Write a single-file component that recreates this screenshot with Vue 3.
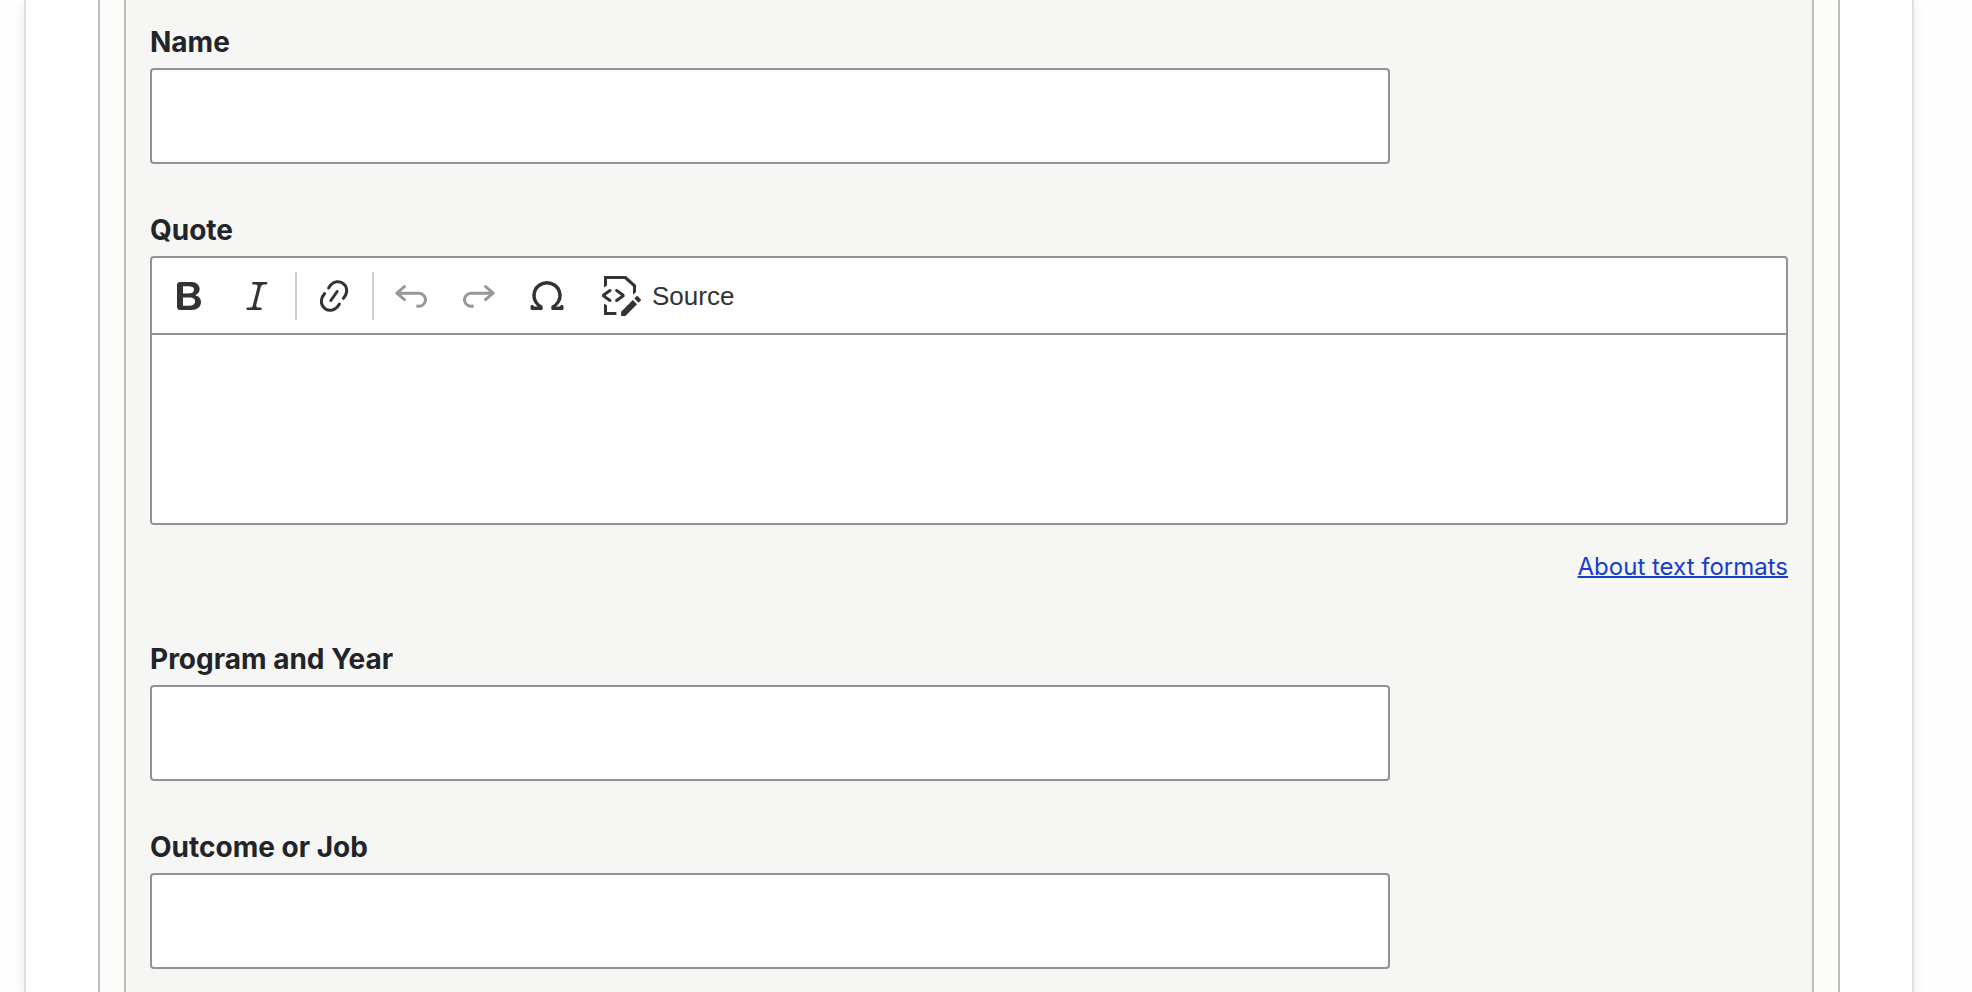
<script setup>
import { ref } from 'vue'

const name = ref('')
const quote = ref('')
const program = ref('')
const outcome = ref('')

const icons = {
  bold: 'M10.187 17H5.773c-.637 0-1.092-.138-1.364-.415-.273-.277-.409-.718-.409-1.323V4.738c0-.617.14-1.062.419-1.332.279-.27.73-.406 1.354-.406h4.68c.69 0 1.288.041 1.793.124.506.083.96.242 1.36.478.341.197.644.447.906.75a3.262 3.262 0 0 1 .808 2.162c0 1.401-.722 2.426-2.167 3.075C15.05 10.175 16 11.315 16 13.01a3.756 3.756 0 0 1-2.296 3.504 6.1 6.1 0 0 1-1.517.377c-.571.073-1.238.11-2 .11zm-.217-6.217H7v4.087h3.069c1.977 0 2.965-.69 2.965-2.072 0-.707-.256-1.22-.768-1.537-.512-.319-1.277-.478-2.296-.478zM7 5.13v3.619h2.606c.729 0 1.292-.067 1.69-.2a1.6 1.6 0 0 0 .91-.765c.165-.267.247-.566.247-.897 0-.707-.26-1.176-.778-1.409-.519-.232-1.31-.348-2.375-.348H7z',
  italic: 'm9.586 14.633.021.004c-.036.335.095.655.393.962.082.083.173.15.274.201h1.474a.6.6 0 1 1 0 1.2H5.304a.6.6 0 0 1 0-1.2h1.15c.474-.07.809-.182 1.005-.334.157-.122.291-.32.404-.597l2.416-9.55a1.053 1.053 0 0 0-.281-.823 1.12 1.12 0 0 0-.442-.296H8.15a.6.6 0 0 1 0-1.2h6.443a.6.6 0 1 1 0 1.2h-1.195c-.376.056-.65.155-.823.296-.215.175-.423.439-.623.79l-2.366 9.347z',
  link: 'm11.077 15 .991-1.416a.75.75 0 1 1 1.229.86l-1.148 1.64a.748.748 0 0 1-.217.206 5.251 5.251 0 0 1-8.503-5.955.741.741 0 0 1 .12-.274l1.147-1.639a.75.75 0 1 1 1.228.86L4.933 10.7l.006.003a3.75 3.75 0 0 0 6.132 4.294l.006.004zm5.494-5.335a.748.748 0 0 1-.12.274l-1.147 1.639a.75.75 0 1 1-1.228-.86l.86-1.23a3.75 3.75 0 0 0-6.144-4.301l-.86 1.229a.75.75 0 0 1-1.229-.86l1.148-1.64a.748.748 0 0 1 .217-.206 5.251 5.251 0 0 1 8.503 5.955zm-4.563-2.532a.75.75 0 0 1 .184 1.045l-3.155 4.505a.75.75 0 1 1-1.229-.86l3.155-4.506a.75.75 0 0 1 1.045-.184z',
  undo: 'm5.042 9.367 2.189 1.837a.75.75 0 0 1-.965 1.149l-3.788-3.18a.747.747 0 0 1-.21-.284.75.75 0 0 1 .17-.945L6.23 4.762a.75.75 0 1 1 .964 1.15L4.863 7.866h8.917A.75.75 0 0 1 14 7.9a4 4 0 1 1-1.477 7.718l.344-1.489a2.5 2.5 0 1 0 1.094-4.73l.008-.032H5.042z',
  redo: 'm14.958 9.367-2.189 1.837a.75.75 0 0 0 .965 1.149l3.788-3.18a.747.747 0 0 0 .21-.284.75.75 0 0 0-.17-.945L13.77 4.762a.75.75 0 1 0-.964 1.15l2.331 1.955H6.22A.75.75 0 0 0 6 7.9a4 4 0 1 0 1.477 7.718l-.344-1.489A2.5 2.5 0 1 1 6.039 9.4l-.008-.032h8.927z',
  omega: 'M10 2.5a7.47 7.47 0 0 1 4.231 1.31 7.268 7.268 0 0 1 2.703 3.454 7.128 7.128 0 0 1 .199 4.353c-.39 1.436-1.475 2.72-2.633 3.677h2.013c0-.226.092-.443.254-.603a.876.876 0 0 1 1.229 0c.163.16.254.377.254.603v.853c0 .209-.078.41-.22.567a.873.873 0 0 1-.547.28l-.101.006h-4.695a.517.517 0 0 1-.516-.518v-1.265c0-.21.128-.398.317-.489a5.601 5.601 0 0 0 2.492-2.371 5.459 5.459 0 0 0 .552-3.693 5.53 5.53 0 0 0-1.955-3.2A5.71 5.71 0 0 0 10 4.206 5.708 5.708 0 0 0 6.419 5.46 5.527 5.527 0 0 0 4.46 8.663a5.457 5.457 0 0 0 .554 3.695 5.6 5.6 0 0 0 2.497 2.37.55.55 0 0 1 .317.49v1.264c0 .286-.23.518-.516.518H2.618a.877.877 0 0 1-.614-.25.845.845 0 0 1-.254-.603v-.853c0-.226.091-.443.254-.603a.876.876 0 0 1 1.228 0c.163.16.255.377.255.603h1.925c-1.158-.958-2.155-2.241-2.545-3.678a7.128 7.128 0 0 1 .199-4.352 7.268 7.268 0 0 1 2.703-3.455A7.475 7.475 0 0 1 10 2.5z',
}

const groups = [
  [{ label: 'Bold', icon: 'bold' }, { label: 'Italic', icon: 'italic' }],
  [{ label: 'Link', icon: 'link' }],
  [
    { label: 'Undo', icon: 'undo', disabled: true },
    { label: 'Redo', icon: 'redo', disabled: true },
    { label: 'Special characters', icon: 'omega' },
  ],
]
</script>

<template>
  <main class="page">
    <form class="card" @submit.prevent>
      <div class="outer">
        <div class="inner">
          <div class="field">
            <label class="label" for="name">Name</label>
            <input id="name" v-model="name" class="input" type="text" />
          </div>

          <div class="field">
            <label class="label" for="quote">Quote</label>
            <div class="editor">
              <div class="toolbar" role="toolbar" aria-label="Editor toolbar">
                <template v-for="(group, i) in groups" :key="i">
                  <span v-if="i" class="separator"></span>
                  <button
                    v-for="tool in group"
                    :key="tool.icon"
                    class="tool"
                    type="button"
                    :aria-label="tool.label"
                    :disabled="tool.disabled"
                  >
                    <svg class="icon" viewBox="0 0 20 20" aria-hidden="true">
                      <path :d="icons[tool.icon]" />
                    </svg>
                  </button>
                </template>
                <button class="tool source" type="button">
                  <svg class="icon" viewBox="0 0 20 20" aria-hidden="true">
                    <path fill-rule="evenodd" d="m12.5 0 5 4.5v15.003h-16V0h11zM3 1.5v3.25l-1.497 1-.003 8 1.5 1v3.254L7.685 18l-.001 1.504H17.5V8.002L16 9.428l-.004-4.22-4.222-3.692L3 1.5z" />
                    <path d="M4.06 6.64a.75.75 0 0 1 .958 1.15l-.085.07L2.29 9.75l2.646 1.89c.302.216.4.62.232.951l-.058.095a.75.75 0 0 1-.951.232l-.095-.058-3.5-2.5V9.14l3.496-2.5zm4.194 6.22a.75.75 0 0 1-.958-1.149l.085-.07 2.643-1.89-2.646-1.89a.75.75 0 0 1-.232-.952l.058-.095a.75.75 0 0 1 .95-.232l.096.058 3.5 2.5v1.22l-3.496 2.5zm7.644-.836 2.122 2.122-5.825 5.809-2.125-.005.003-2.116zm2.539-1.847 1.414 1.414a.5.5 0 0 1 0 .707l-1.06 1.06-2.122-2.12 1.061-1.061a.5.5 0 0 1 .707 0z" />
                  </svg>
                  Source
                </button>
              </div>
              <textarea id="quote" v-model="quote" class="content"></textarea>
            </div>
            <div class="help"><a href="#formats">About text formats</a></div>
          </div>

          <div class="field">
            <label class="label" for="program">Program and Year</label>
            <input id="program" v-model="program" class="input" type="text" />
          </div>

          <div class="field">
            <label class="label" for="outcome">Outcome or Job</label>
            <input id="outcome" v-model="outcome" class="input" type="text" />
          </div>
        </div>
      </div>
    </form>
  </main>
</template>

<style>
body {
  margin: 0;
  background: #fefefe;
}
</style>

<style scoped>
.page,
.page * {
  box-sizing: border-box;
}
.page {
  display: flex;
  min-height: 100vh;
  padding: 0 58px 0 24px;
  color: #232429;
  font-family: Inter, "Liberation Sans", sans-serif;
}
.card {
  display: flex;
  flex: 1;
  min-width: 0;
  padding: 0 72px;
  border: solid #dedfe4;
  border-width: 0 2px;
  background: #fff;
  box-shadow: 0 4px 12px rgba(0, 0, 0, 0.08);
}
.outer {
  display: flex;
  flex: 1;
  min-width: 0;
  padding: 0 24px;
  border: solid #bebebd;
  border-width: 0 2px;
  background: #fcfcfa;
}
.inner {
  display: flex;
  flex: 1;
  flex-direction: column;
  gap: 48px;
  min-width: 0;
  padding: 24px 24px 20px;
  border: solid #bebebd;
  border-width: 0 2px;
  background: #f6f6f4;
}
.label {
  display: block;
  width: fit-content;
  margin-bottom: 8px;
  font-size: 28px;
  font-weight: 700;
  line-height: 36px;
}
.input {
  display: block;
  width: 1240px;
  max-width: 100%;
  height: 96px;
  padding: 0 30px;
  border: 2px solid #919297;
  border-radius: 4px;
  background: #fff;
  color: inherit;
  font: inherit;
  font-size: 32px;
}
.editor {
  overflow: hidden;
  border: 2px solid #919297;
  border-radius: 4px;
  background: #fff;
}
.toolbar {
  display: flex;
  gap: 7px;
  padding: 14px 7px 13px;
  border-bottom: 2px solid #919297;
}
.tool {
  display: flex;
  align-items: center;
  height: 48px;
  padding: 0 11px 0 10px;
  border: 0;
  background: none;
  color: #333;
}
.tool:disabled .icon {
  opacity: 0.5;
}
.icon {
  display: block;
  flex: none;
  width: 40px;
  height: 40px;
  fill: currentColor;
}
.separator {
  width: 2px;
  height: 48px;
  background: #ccccd1;
}
.source {
  gap: 11px;
  padding: 0 16px;
  font-family: "Liberation Sans", Arial, sans-serif;
  font-size: 26px;
  line-height: 30px;
}
.content {
  display: block;
  width: 100%;
  height: 188px;
  padding: 24px;
  border: 0;
  outline: 0;
  background: #fff;
  color: inherit;
  font: inherit;
  font-size: 32px;
  resize: none;
}
.help {
  padding: 24px 0 8px;
  font-size: 24px;
  line-height: 36px;
  text-align: right;
}
.help a {
  color: #173ec8;
  text-decoration: underline;
  text-decoration-thickness: 2px;
}
</style>
